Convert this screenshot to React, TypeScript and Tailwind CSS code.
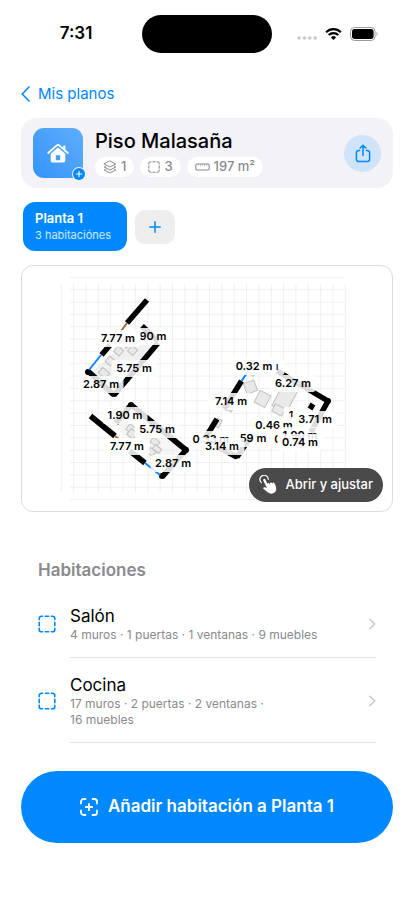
import React from "react";

type Dimension = { text: string; x: number; y: number };

const gridColumns = Array.from({ length: 24 }, (_, i) => 61.3 + i * 12.35);
const gridRows = Array.from({ length: 19 }, (_, i) => 277.3 + i * 12.35);

const walls: [number, number, number, number][] = [
  // bedroom, upper left
  [147, 300, 127, 323],
  [110, 345, 101.5, 355],
  [142, 326, 158, 341],
  [158, 343, 114, 395],
  [88, 371, 114, 395],
  // bedroom, lower left
  [90.5, 416, 115, 436],
  [130, 451, 145, 463],
  [131, 405, 186, 450],
  [131, 405, 116, 423],
  [162, 477, 186, 450],
  // living room
  [241.5, 381, 224, 409],
  [217, 419, 204, 440],
  [204, 440, 237, 457],
  [237, 457, 250, 438],
  [277, 371, 328, 401],
  [328, 401, 311, 432],
  [313, 404, 310, 409],
];

const corners: [number, number][] = [
  [88, 372],
  [114, 394],
  [131, 405],
  [186, 450],
  [162, 476],
  [236, 456],
  [328, 401],
];

const windows: [number, number, number, number][] = [
  [101, 355, 89, 370],
  [145, 463, 160, 475],
  [247, 373, 241.5, 381],
  [290, 379, 300, 384],
];

const doors: [number, number, number, number][] = [
  [127, 323, 121, 331],
  [115, 436, 119, 439],
  [227, 450, 232, 453],
];

const furniture: [number, number, number, number, number][] = [
  // centre x, centre y, width, height, angle
  [118.5, 351, 7, 7, 40],
  [132.5, 350.5, 7, 7, 40],
  [110, 361, 7, 7, 40],
  [126, 343, 7, 7, 40],
  [104, 373, 9, 7, 40],
  [131, 429, 8, 7, 40],
  [132, 434, 8, 7, 40],
  [155, 442, 8, 6, 40],
  [151.5, 452, 7, 6, 40],
  [157, 449, 8, 5, 40],
  [253, 370, 9, 9, 45],
  [250.5, 387, 11, 11, -20],
  [262.5, 399, 12, 13, 28],
  [286, 396, 16, 30, 28],
  [278.5, 410, 11, 8, 28],
  [218, 423, 5, 8, 28],
  [230, 409, 5, 4, 28],
];

// Later labels cover the earlier ones where rooms crowd together.
const dimensions: Dimension[] = [
  { text: "90 m", x: 153, y: 336 },
  { text: "7.77 m", x: 118, y: 338 },
  { text: "5.75 m", x: 134, y: 368 },
  { text: "2.87 m", x: 101, y: 384 },
  { text: "1.90 m", x: 125, y: 415 },
  { text: "5.75 m", x: 157, y: 429 },
  { text: "7.77 m", x: 127, y: 446 },
  { text: "2.87 m", x: 173, y: 463 },
  { text: "ı", x: 277, y: 366 },
  { text: "0.32 m", x: 254, y: 366 },
  { text: "6.27 m", x: 293, y: 383 },
  { text: "7.14 m", x: 231, y: 401 },
  { text: "1", x: 291, y: 415 },
  { text: "3.71 m", x: 315, y: 419 },
  { text: "0.33 m", x: 211, y: 439 },
  { text: "59 m", x: 253, y: 438 },
  { text: "0", x: 278, y: 439 },
  { text: "3.14 m", x: 222, y: 446 },
  { text: "0.46 m", x: 274, y: 425 },
  { text: "1.90 m", x: 300, y: 435 },
  { text: "0.74 m", x: 300, y: 442 },
];

function FloorPlan() {
  return (
    <svg viewBox="22 266 370 245" className="block w-full" role="img" aria-label="Plano de Planta 1">
      <g stroke="#f0f0f0" strokeWidth="1">
        {gridColumns.map((x) => (
          <line key={x} x1={x} x2={x} y1="284" y2="493" />
        ))}
        {gridRows.map((y) => (
          <line key={y} x1="70" x2="345" y1={y} y2={y} />
        ))}
      </g>
      <g fill="#e9e9e9">
        <path d="M142 328 156 342 112 390 93 371Z" opacity=".7" />
        <path d="M130 409 180 450 162 470 118 429Z" opacity=".4" />
      </g>
      <g fill="#e9e9e9" stroke="#c0c0c0" strokeWidth="1">
        {furniture.map(([cx, cy, w, h, a]) => (
          <rect key={`${cx}-${cy}`} x={cx - w / 2} y={cy - h / 2} width={w} height={h} transform={`rotate(${a} ${cx} ${cy})`} />
        ))}
      </g>
      <g stroke="#000" strokeWidth="5.5">
        {walls.map(([x1, y1, x2, y2]) => (
          <line key={`${x1}-${y1}-${x2}`} x1={x1} y1={y1} x2={x2} y2={y2} />
        ))}
      </g>
      {corners.map(([x, y]) => (
        <circle key={`${x}-${y}`} cx={x} cy={y} r="3" />
      ))}
      <g stroke="#0a84ff" strokeWidth="2">
        {windows.map(([x1, y1, x2, y2]) => (
          <line key={x1} x1={x1} y1={y1} x2={x2} y2={y2} />
        ))}
      </g>
      <g stroke="#a2622d" strokeWidth="1.8">
        {doors.map(([x1, y1, x2, y2]) => (
          <line key={x1} x1={x1} y1={y1} x2={x2} y2={y2} />
        ))}
      </g>
      {dimensions.map(({ text, x, y }) => {
        const width = text.length * 6 + 9;
        return (
          <g key={`${x}-${y}`}>
            <rect x={x - width / 2} y={y - 8} width={width} height="17" rx="3" fill="#fff" fillOpacity=".86" />
            <text x={x} y={y + 4} textAnchor="middle" fontSize="11" fontWeight="600" fill="#000">
              {text}
            </text>
          </g>
        );
      })}
    </svg>
  );
}

function DashedSquare({ className }: { className: string }) {
  return (
    <svg viewBox="0 0 18 18" className={className} fill="none" stroke="currentColor" strokeWidth="1.6" strokeLinecap="round" aria-hidden="true">
      <path d="M1.2 4.6V3.6a2.4 2.4 0 0 1 2.4-2.4h1M13.4 1.2h1a2.4 2.4 0 0 1 2.4 2.4v1M16.8 13.4v1a2.4 2.4 0 0 1-2.4 2.4h-1M4.6 16.8h-1a2.4 2.4 0 0 1-2.4-2.4v-1" />
      <path d="M7.3 1.2h3.4M7.3 16.8h3.4M1.2 7.3v3.4M16.8 7.3v3.4" />
    </svg>
  );
}

function LayersIcon() {
  return (
    <svg viewBox="0 0 14 14" className="size-3.5" fill="none" stroke="currentColor" strokeWidth="1" strokeLinejoin="round" strokeLinecap="round" aria-hidden="true">
      <path d="M7 1 12.8 4 7 7 1.2 4Z" />
      <path d="M2.6 6.2 1.2 7 7 10l5.8-3-1.4-.8M2.6 9.2 1.2 10 7 13l5.8-3-1.4-.8" />
    </svg>
  );
}

function RulerIcon() {
  return (
    <svg viewBox="0 0 15 8" className="h-2 w-[15px]" fill="none" stroke="currentColor" strokeWidth="1.1" strokeLinecap="round" aria-hidden="true">
      <rect x=".8" y="1" width="13.4" height="6" rx="1.4" />
      <path d="M3.4 1.4v1M5.5 1.4v1.6M7.6 1.4v1M9.7 1.4v1.6M11.8 1.4v1" strokeWidth=".5" />
    </svg>
  );
}

function Chip({ icon, children }: { icon: React.ReactNode; children: React.ReactNode }) {
  return (
    <span className="flex h-5 items-center gap-1 rounded-full bg-white px-2 text-[13px] font-medium text-[#8a8a8e]">
      {icon}
      {children}
    </span>
  );
}

function StatusBar() {
  return (
    <div className="grid h-[68px] grid-cols-[1fr_130px_1fr] items-center">
      <span className="justify-self-center pl-2.5 text-[17px] font-semibold">7:31</span>
      <div className="h-[38px] rounded-full bg-black" />
      <div className="flex items-center justify-end gap-2 pr-9">
        <svg viewBox="0 0 20 12" className="h-3 w-5" fill="#c9c9c9" aria-hidden="true">
          <circle cx="2" cy="10" r="1.8" />
          <circle cx="7.4" cy="10" r="1.8" />
          <circle cx="12.8" cy="10" r="1.8" />
          <circle cx="18.2" cy="10" r="1.8" />
        </svg>
        <svg viewBox="0 0 17 12" className="h-3 w-[17px]" aria-hidden="true">
          <path d="M1.1 4.2a10.5 10.5 0 0 1 14.8 0M3.7 7.1a6.8 6.8 0 0 1 9.6 0" fill="none" stroke="#000" strokeWidth="2.1" />
          <path d="M8.5 12 5.9 9.4a3.7 3.7 0 0 1 5.2 0Z" />
        </svg>
        <svg viewBox="0 0 28 14" className="h-3.5 w-7" aria-hidden="true">
          <rect x=".5" y=".5" width="24.6" height="13" rx="4" fill="none" stroke="#9a9a9a" />
          <rect x="2" y="2" width="21.6" height="10" rx="2.7" />
          <path d="M26.5 5v4c1.4-.5 1.4-3.5 0-4Z" fill="#9a9a9a" />
        </svg>
      </div>
    </div>
  );
}

function RoomRow({ name, details }: { name: string; details: string }) {
  return (
    <li>
      <button type="button" className="flex w-full items-center gap-3.5 text-left">
        <DashedSquare className="size-[18px] shrink-0 text-[#0088ff]" />
        <span className="flex min-w-0 flex-1 items-center border-b border-[#e4e4e6] pt-4 pb-3.5">
          <span className="flex flex-1 flex-col">
            <span className="text-[17px] leading-[22px]">{name}</span>
            <span className="max-w-[260px] text-xs leading-4 text-[#8a8a8e]">{details}</span>
          </span>
          <svg viewBox="0 0 8 12" className="h-3 w-2" fill="none" stroke="#c4c4c6" strokeWidth="1.3" strokeLinecap="round" strokeLinejoin="round" aria-hidden="true">
            <path d="M1.8 1.2 6.8 6l-5 4.8" />
          </svg>
        </span>
      </button>
    </li>
  );
}

export default function App() {
  return (
    <div className="min-h-screen bg-white pb-14 font-['Inter','Liberation_Sans',sans-serif] text-black">
      <StatusBar />
      <main className="px-[21px]">
        <nav className="flex h-[50px] items-center pt-0.5">
          <a href="#planos" className="flex items-center gap-2 text-[15px] text-[#0088ff]">
            <svg viewBox="0 0 9 16" className="h-4 w-[9px]" fill="none" stroke="currentColor" strokeWidth="1.6" strokeLinecap="round" strokeLinejoin="round" aria-hidden="true">
              <path d="M8 1 1.2 8 8 15" />
            </svg>
            Mis planos
          </a>
        </nav>

        <header className="flex h-[70px] items-center gap-3 rounded-2xl bg-[#f2f2f7] px-3">
          <div className="relative flex size-[50px] shrink-0 items-center justify-center rounded-[11px] bg-linear-to-tr from-[#3393fa] to-[#5eaefb]">
            <svg viewBox="0 0 22 20" className="h-5 w-[22px]" aria-hidden="true">
              <path d="M1.2 10 9.8 2.3a1.8 1.8 0 0 1 2.4 0L20.8 10" fill="none" stroke="#fff" strokeWidth="1.7" strokeLinecap="round" />
              <path d="M16.2 2.6h2.2v4.6l-2.2-2Z" fill="#fff" />
              <path fillRule="evenodd" d="M11 4.4 18.3 10.8v6.9a1.8 1.8 0 0 1-1.8 1.8h-11a1.8 1.8 0 0 1-1.8-1.8v-6.9ZM8.8 12.3v4.9h4.4v-4.9Z" fill="#fff" />
            </svg>
            <span className="absolute -right-0.5 -bottom-0.5 flex size-3 items-center justify-center rounded-full bg-[#0088ff] ring-1 ring-[#f2f2f7]">
              <svg viewBox="0 0 8 8" className="size-2" stroke="#fff" strokeWidth="1.1" strokeLinecap="round" aria-hidden="true">
                <path d="M4 1.2v5.6M1.2 4h5.6" />
              </svg>
            </span>
          </div>
          <div className="flex min-w-0 flex-1 flex-col gap-1">
            <h1 className="text-xl leading-6 font-medium">Piso Malasaña</h1>
            <div className="flex gap-1.5">
              <Chip icon={<LayersIcon />}>1</Chip>
              <Chip icon={<DashedSquare className="size-3" />}>3</Chip>
              <Chip icon={<RulerIcon />}>197 m²</Chip>
            </div>
          </div>
          <button type="button" aria-label="Compartir" className="flex size-[37px] shrink-0 items-center justify-center rounded-full bg-[#cfe3f9] text-[#0088ff]">
            <svg viewBox="0 0 16 19" className="h-[19px] w-4" fill="none" stroke="currentColor" strokeWidth="1.5" strokeLinecap="round" strokeLinejoin="round" aria-hidden="true">
              <path d="M4.6 6.5h-1a2.2 2.2 0 0 0-2.2 2.2v6.6a2.2 2.2 0 0 0 2.2 2.2h8.8a2.2 2.2 0 0 0 2.2-2.2V8.7a2.2 2.2 0 0 0-2.2-2.2h-1" />
              <path d="M8 11.5V1.4M5.2 4 8 1.2 10.8 4" />
            </svg>
          </button>
        </header>

        <div className="mt-3.5 flex items-center gap-2 px-0.5">
          <button type="button" className="flex h-[49px] min-w-[104px] flex-col justify-center rounded-xl bg-[#0088ff] px-3 text-left text-white">
            <span className="text-[13px] leading-[17px] font-semibold">Planta 1</span>
            <span className="text-[11px] leading-4 text-white/80">3 habitaciónes</span>
          </button>
          <button type="button" aria-label="Añadir planta" className="flex h-[34px] w-10 items-center justify-center rounded-[10px] bg-[#eeeeef] text-[#0088ff]">
            <svg viewBox="0 0 12 12" className="size-3" stroke="currentColor" strokeWidth="1.5" strokeLinecap="round" aria-hidden="true">
              <path d="M6 .8v10.4M.8 6h10.4" />
            </svg>
          </button>
        </div>

        <section className="relative mt-3.5 overflow-hidden rounded-xl border border-[#dcdcde]">
          <FloorPlan />
          <button type="button" className="absolute right-[9px] bottom-[9px] flex h-[34px] items-center gap-1.5 rounded-full bg-[#4a4a4a] px-2.5 text-[13px] font-medium text-white">
            <svg viewBox="0 0 20 20" className="size-5" fill="none" stroke="#fff" strokeLinecap="round" aria-hidden="true">
              <path d="M2.4 7.6A4.2 4.2 0 1 1 9.3 4.3" strokeWidth="1.2" />
              <path d="M5.3 5 9 12.5M9.3 9.3l1.3 2.5M11.900 8.6l1.2 2.5M14.4 8.8l1 2" strokeWidth="2.3" />
              <path d="M8 9.5l7-.7c2.2 2 3 5.2 1.5 7.8-1.7 2.5-5.5 2.7-7.5 1L4.6 14c-1-1.1.2-2.3 1.5-1.7l2.4 1Z" fill="#fff" stroke="none" />
            </svg>
            Abrir y ajustar
          </button>
        </section>

        <section className="px-[17px] pt-[47px]">
          <h2 className="text-[17px] leading-[22px] font-semibold text-[#8a8a8e]">Habitaciones</h2>
          <ul className="mt-2">
            <RoomRow name="Salón" details="4 muros · 1 puertas · 1 ventanas · 9 muebles" />
            <RoomRow name="Cocina" details={"17 muros · 2 puertas · 2 ventanas · 16\u00a0muebles"} />
          </ul>
        </section>

        <button type="button" className="mt-7 flex h-[72px] w-full items-center justify-center gap-2.5 rounded-full bg-[#0088ff] text-[17px] font-semibold text-white">
          <svg viewBox="0 0 18 18" className="size-[18px]" fill="none" stroke="currentColor" strokeWidth="1.8" strokeLinecap="round" aria-hidden="true">
            <path d="M1 5.5V3.6A2.6 2.6 0 0 1 3.6 1h1.9M12.5 1h1.9A2.6 2.6 0 0 1 17 3.6v1.9M17 12.5v1.9a2.6 2.6 0 0 1-2.6 2.6h-1.9M5.5 17H3.6A2.6 2.6 0 0 1 1 14.4v-1.9M9 5.8v6.4M5.8 9h6.4" />
          </svg>
          Añadir habitación a Planta 1
        </button>
      </main>
    </div>
  );
}
